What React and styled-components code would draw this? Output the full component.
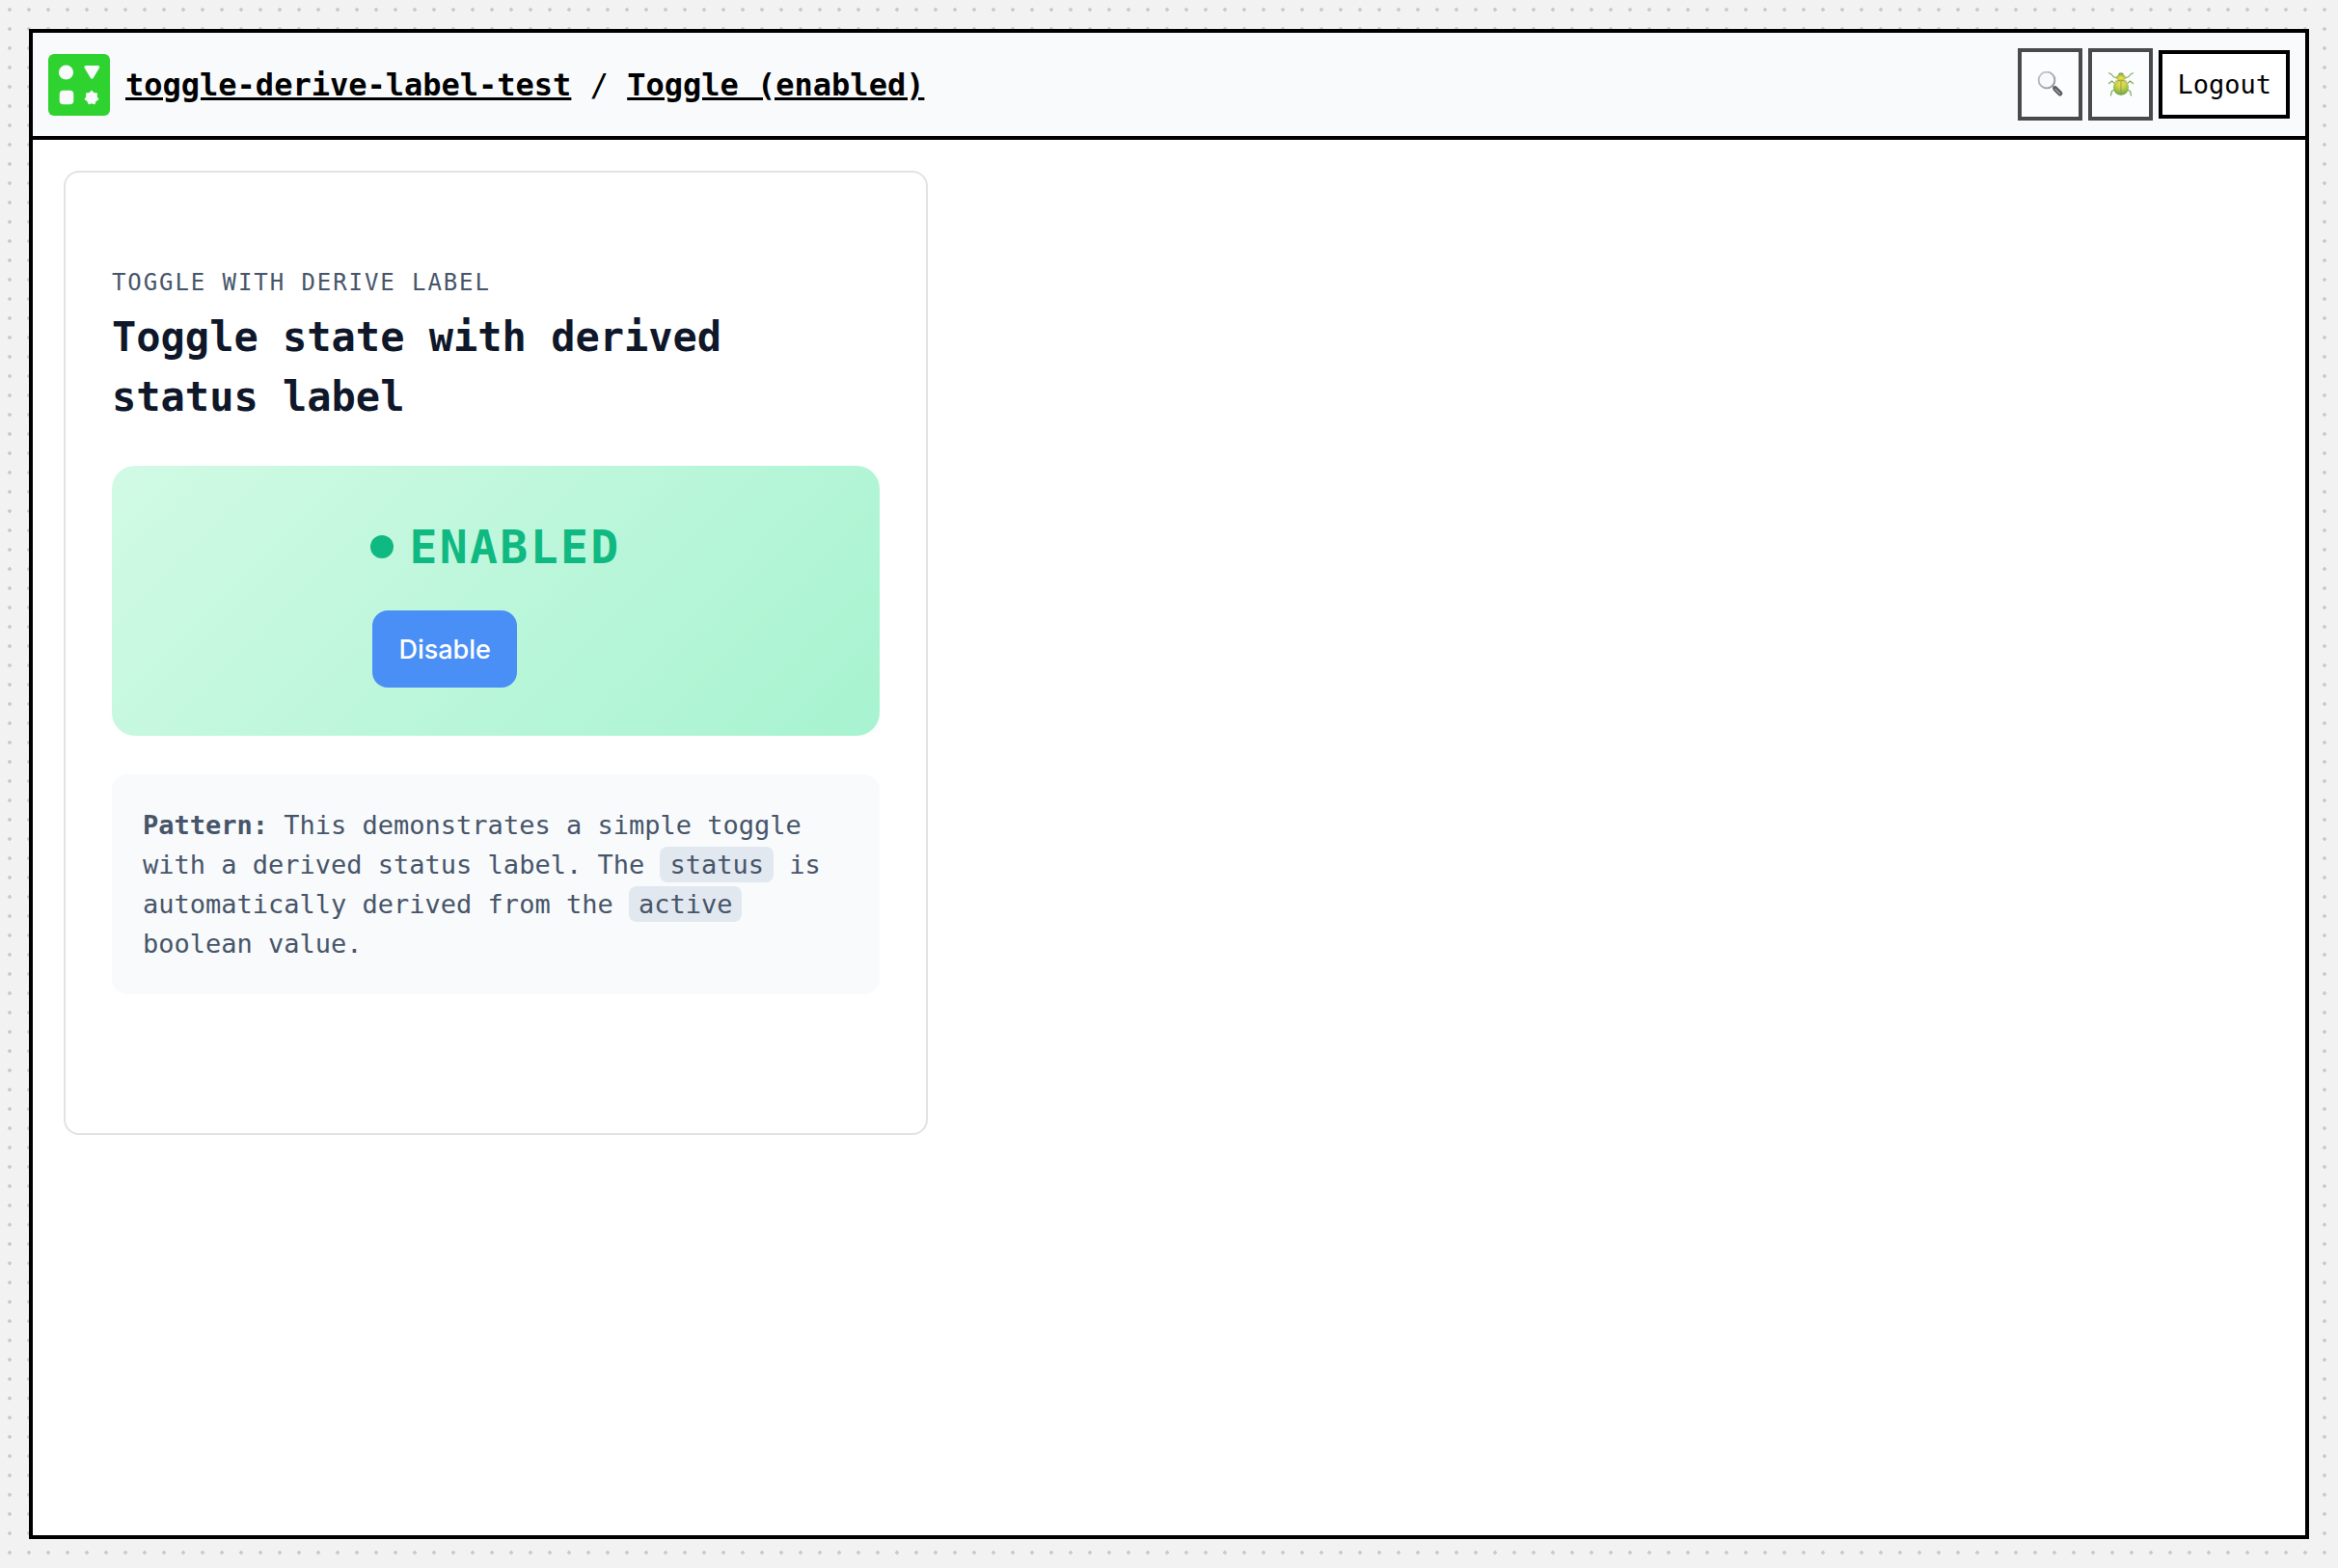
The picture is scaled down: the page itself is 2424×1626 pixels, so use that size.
import React, { useState } from "react";
import styled, { createGlobalStyle } from "styled-components";

const mono = `Menlo, "DejaVu Sans Mono", monospace`;

const GlobalStyle = createGlobalStyle`
  *, *::before, *::after { box-sizing: border-box; }
  body {
    margin: 0;
    color: #000;
    background: #f2f2f2 radial-gradient(circle, #cccccc 2px, transparent 2px) 0 0 / 20px 20px;
    font-family: ${mono};
  }
`;

const Page = styled.div`
  display: flex;
  min-height: 100vh;
  padding: 30px;
`;

const Frame = styled.div`
  flex: 1;
  display: flex;
  flex-direction: column;
  min-width: 0;
  border: 4px solid #000;
  background: #fff;
`;

const Header = styled.header`
  display: flex;
  align-items: center;
  gap: 16px;
  padding: 16px;
  border-bottom: 4px solid #000;
  background: #f8fafc;
`;

const Logo = styled.svg`
  flex: none;
  width: 64px;
  height: 64px;
`;

const Breadcrumb = styled.nav`
  flex: 1;
  font-size: 32px;
  line-height: 48px;
`;

const Crumb = styled.a`
  color: #000;
  font-weight: 700;
  text-decoration: underline;
`;

const Actions = styled.div`
  display: flex;
  align-items: center;
  gap: 6px;
`;

const HeaderButton = styled.button`
  padding: 16px 15px;
  border: 4px solid #000;
  border-radius: 0;
  background: #fff;
  color: #000;
  font-family: ${mono};
  font-size: 27px;
  line-height: 31px;
  cursor: pointer;
`;

const IconButton = styled(HeaderButton)`
  display: flex;
  align-items: center;
  justify-content: center;
  width: 67px;
  height: 75px;
  padding: 0;
  opacity: 0.7;
`;

const Emoji = styled.svg`
  width: 28px;
  height: 28px;
`;

const Main = styled.main`
  padding: 32px;
`;

const Card = styled.article`
  width: 100%;
  max-width: 896px;
  padding: 96px 48px 144px;
  border: 2px solid #e2e2e2;
  border-radius: 16px;
  background: #fff;
`;

const Eyebrow = styled.p`
  margin: 0 0 8px;
  color: #475569;
  font-size: 24px;
  line-height: 36px;
  letter-spacing: 0.08em;
  text-transform: uppercase;
`;

const Title = styled.h1`
  margin: 0 0 40px;
  color: #0f172a;
  font-size: 42px;
  line-height: 62px;
`;

const StatusPanel = styled.section`
  display: flex;
  justify-content: center;
  margin-bottom: 40px;
  padding: 48px;
  border-radius: 24px;
  background: linear-gradient(135deg, #d1fae5 0%, #a7f3d0 100%);
`;

const StatusStack = styled.div`
  display: grid;
  gap: 28px;
`;

const Status = styled.div`
  display: flex;
  align-items: center;
  gap: 16px;
  color: #10b981;
  font-size: 48px;
  font-weight: 700;
  line-height: 72px;
  letter-spacing: 0.05em;
  text-transform: uppercase;
`;

const StatusDot = styled.span`
  width: 24px;
  height: 24px;
  border-radius: 50%;
  background: currentColor;
`;

const ToggleButton = styled.button`
  justify-self: start;
  height: 80px;
  margin: 2px;
  padding: 0 27px;
  border: 0;
  border-radius: 16px;
  background: #4a8ff5;
  color: #fff;
  font-family: Inter, sans-serif;
  font-size: 27px;
  font-weight: 500;
  cursor: pointer;
`;

const Note = styled.p`
  margin: 0;
  padding: 32px;
  border-radius: 16px;
  background: #f8fafc;
  color: #475569;
  font-size: 27px;
  line-height: 41px;
`;

const Code = styled.code`
  padding: 3px 10px;
  border-radius: 8px;
  background: #e2e8f0;
  font-family: ${mono};
  font-size: 27px;
`;

const starPoints = Array.from({ length: 14 }, (_, i) => {
  const radius = i % 2 ? 5.2 : 6.9;
  const angle = (Math.PI * i) / 7 - Math.PI / 2;
  return `${45 + radius * Math.cos(angle)},${45.4 + radius * Math.sin(angle)}`;
}).join(" ");

function LogoMark() {
  return (
    <Logo viewBox="0 0 64 64" aria-hidden="true">
      <rect width="64" height="64" rx="6" fill="#2fd32f" />
      <g fill="#f8fafc">
        <circle cx="18.5" cy="19" r="7.6" />
        <path d="M39 12h12.500q2.500.3 1.300 2.800l-6 10q-1.500 2.300-3 0l-6-10q-1.200-2.500 1.200-2.800z" />
        <rect x="11.700" y="37.700" width="14.600" height="14.600" rx="4" />
        <polygon points={starPoints} stroke="#f8fafc" strokeWidth="1.200" strokeLinejoin="round" />
      </g>
    </Logo>
  );
}

function MagnifierIcon() {
  return (
    <Emoji viewBox="0 0 28 28" aria-hidden="true">
      <defs>
        <linearGradient id="rim" x1="0" y1="0" x2="1" y2="1">
          <stop offset="0" stopColor="#b4bcc6" />
          <stop offset="1" stopColor="#5c6066" />
        </linearGradient>
      </defs>
      <path d="M16 15l3 3" stroke="#777" strokeWidth="2" />
      <path d="M18.800 17.800l5 5" stroke="#17191c" strokeWidth="5.200" strokeLinecap="round" />
      <path d="M19 18.500l4.500 4.500" stroke="#777b80" strokeWidth="1.400" strokeLinecap="round" />
      <circle cx="10" cy="9" r="8.400" fill="#f7f9fb" stroke="url(#rim)" strokeWidth="1.900" />
    </Emoji>
  );
}

function BeetleIcon() {
  return (
    <Emoji viewBox="0 0 28 28" aria-hidden="true">
      <defs>
        <radialGradient id="shell" cx="0.5" cy="0.25" r="0.7">
          <stop offset="0" stopColor="#f2d400" />
          <stop offset="0.4" stopColor="#b9c400" />
          <stop offset="1" stopColor="#3d8a00" />
        </radialGradient>
        <radialGradient id="neck" cx="0.5" cy="0.6" r="0.6">
          <stop offset="0" stopColor="#ffd800" />
          <stop offset="1" stopColor="#6f9f00" />
        </radialGradient>
      </defs>
      <g fill="none" stroke="#4c8a12" strokeWidth="1.200" strokeLinecap="round" strokeLinejoin="round">
        <path d="M9.500 7L6 5.500 4 3 1.500 1.800M18.500 7L22 5.500 24 3l2.500-1.200" />
        <path d="M7.500 12.500L4.500 10 1.500 12.500M20.500 12.500l3-2.500 3 2.500" />
        <path d="M7.500 19L4.500 20.500 3.500 25M20.500 19l3 1.500 1 4.500" />
      </g>
      <ellipse cx="14" cy="3.300" rx="2.800" ry="2" fill="#5f8f00" />
      <ellipse cx="14" cy="6.500" rx="5.200" ry="3.300" fill="url(#neck)" />
      <ellipse cx="14" cy="16.800" rx="8" ry="7.900" fill="url(#shell)" />
      <path d="M8 10.300q6-2.300 12 0M14 10v14.500" fill="none" stroke="#6b6d00" strokeWidth="0.900" />
    </Emoji>
  );
}

export default function App() {
  const [active, setActive] = useState(true);
  return (
    <>
      <GlobalStyle />
      <Page>
        <Frame>
          <Header>
            <LogoMark />
            <Breadcrumb aria-label="Breadcrumb">
              <Crumb href="#project">toggle-derive-label-test</Crumb> / <Crumb href="#toggle">Toggle (enabled)</Crumb>
            </Breadcrumb>
            <Actions>
              <IconButton type="button" aria-label="Search"><MagnifierIcon /></IconButton>
              <IconButton type="button" aria-label="Debug"><BeetleIcon /></IconButton>
              <HeaderButton type="button">Logout</HeaderButton>
            </Actions>
          </Header>
          <Main>
            <Card>
              <Eyebrow>Toggle with derive label</Eyebrow>
              <Title>Toggle state with derived status label</Title>
              <StatusPanel>
                <StatusStack>
                  <Status role="status"><StatusDot />{active ? "Enabled" : "Disabled"}</Status>
                  <ToggleButton type="button" onClick={() => setActive(!active)}>{active ? "Disable" : "Enable"}</ToggleButton>
                </StatusStack>
              </StatusPanel>
              <Note>
                <strong>Pattern:</strong> This demonstrates a simple toggle with a derived status label. The <Code>status</Code> is
                automatically derived from the <Code>active</Code> boolean value.
              </Note>
            </Card>
          </Main>
        </Frame>
      </Page>
    </>
  );
}
